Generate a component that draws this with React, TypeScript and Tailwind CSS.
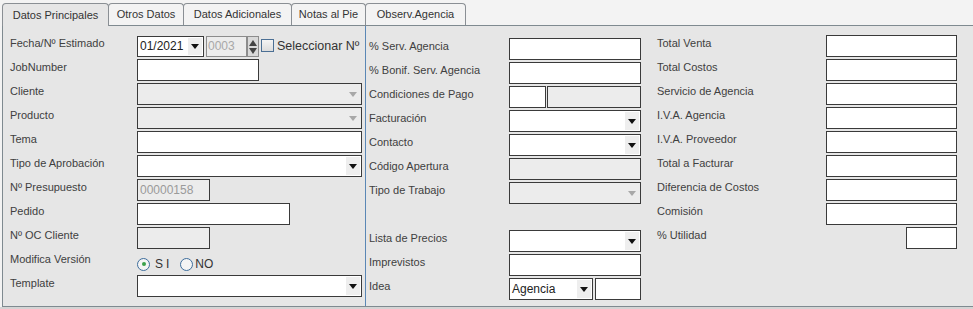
import React from "react";

const font = { fontFamily: '"Liberation Sans", Arial, sans-serif' };

function Arrow({ disabled }: { disabled?: boolean }) {
  return (
    <div
      className={`absolute right-[1px] top-[1px] bottom-[1px] w-[14px] flex items-center justify-center ${
        disabled ? "" : "bg-[#eeeeee]"
      }`}
    >
      <svg width="8" height="5" viewBox="0 0 8 5">
        <path d="M0 0 L8 0 L4 5 Z" fill={disabled ? "#a8a8a8" : "#111"} />
      </svg>
    </div>
  );
}

function Select({ w, disabled, value }: { w: string; disabled?: boolean; value?: string }) {
  return (
    <div
      className={`relative h-[22px] border border-[#3a3a3a] ${w} ${
        disabled ? "bg-[#ececec]" : "bg-white"
      } text-[12px] text-[#222] leading-[20px] pl-[2px]`}
    >
      {value}
      <Arrow disabled={disabled} />
    </div>
  );
}

function Input({ w, disabled, value }: { w: string; disabled?: boolean; value?: string }) {
  return (
    <div
      className={`h-[22px] border border-[#3a3a3a] ${w} ${
        disabled ? "bg-[#ececec] text-[#9a9a9a]" : "bg-white text-[#222]"
      } text-[12px] leading-[20px] pl-[2px]`}
    >
      {value}
    </div>
  );
}

function Row({ label, lw, children }: { label: string; lw: string; children?: React.ReactNode }) {
  return (
    <div className="flex items-start h-[24px]">
      <div className={`${lw} shrink-0 leading-4 text-[11px] text-[#404040]`}>{label}</div>
      <div className="flex items-start gap-[2px]">{children}</div>
    </div>
  );
}

const tabs = ["Datos Principales", "Otros Datos", "Datos Adicionales", "Notas al Pie", "Observ.Agencia"];
const tabW = ["w-[107px]", "w-[76px]", "w-[109px]", "w-[75px]", "w-[101px]"];

export default function App() {
  return (
    <div className="w-[973px] h-[309px] bg-[#f3f3f3] overflow-hidden flex flex-col" style={font}>
      {/* tabs */}
      <div className="flex items-end h-[25px] pl-[2px] shrink-0">
        {tabs.map((t, i) => (
          <div
            key={t}
            className={`${tabW[i]} ${i > 0 ? "-ml-[1px]" : ""} h-[22px] border border-b-0 border-[#8a8f94] rounded-t-[4px] flex items-center justify-center text-[11px] text-[#333] relative ${
              i === 0 ? "bg-[#e6e6e6] z-10 -mb-[1px] h-[23px]" : "bg-[#f3f3f3]"
            }`}
          >
            {t}
          </div>
        ))}
      </div>

      {/* panel */}
      <div className="ml-[2px] h-[282px] shrink-0 bg-[#e6e6e6] border-t border-b border-l border-[#7f8a90] flex">
        {/* left */}
        <div className="w-[362px] pl-[7px] pt-[9px] shrink-0">
          <div className="flex items-start h-[24px]">
            <div className="w-[127px] shrink-0 leading-4 text-[11px] text-[#404040]">Fecha/Nº Estimado</div>
            <div className="flex items-start mt-[1px]">
              <div className="relative h-[21px] w-[67px] border border-[#3a3a3a] bg-white text-[12px] text-[#222] leading-[19px] pl-[2px]">
                01/2021
                <Arrow />
              </div>
              <div className="ml-[2px] h-[21px] w-[41px] border border-[#8c8c8c] bg-[#ececec] text-[12px] text-[#a8a8a8] leading-[19px] pl-[1px]">
                0003
              </div>
              <div className="h-[21px] w-[12px] border border-[#8c8c8c] bg-[#d9d9d9] flex flex-col items-center justify-center gap-[2px]">
                <svg width="8" height="6" viewBox="0 0 8 6">
                  <path d="M4 0 L8 6 L0 6 Z" fill="#444" />
                </svg>
                <svg width="8" height="6" viewBox="0 0 8 6">
                  <path d="M0 0 L8 0 L4 6 Z" fill="#444" />
                </svg>
              </div>
              <div className="ml-[2px] mt-[3px] w-[13px] h-[13px] border border-[#4b6f94] bg-gradient-to-b from-[#f4f4f4] to-[#dcdcdc]" />
              <div className="ml-[3px] mt-[1px] text-[12.5px] leading-[18px] text-[#333]">Seleccionar Nº</div>
            </div>
          </div>
          <Row label="JobNumber" lw="w-[127px]">
            <Input w="w-[122px]" />
          </Row>
          <Row label="Cliente" lw="w-[127px]">
            <Select w="w-[225px]" disabled />
          </Row>
          <Row label="Producto" lw="w-[127px]">
            <Select w="w-[225px]" disabled />
          </Row>
          <Row label="Tema" lw="w-[127px]">
            <Input w="w-[225px]" />
          </Row>
          <Row label="Tipo de Aprobación" lw="w-[127px]">
            <Select w="w-[225px]" />
          </Row>
          <Row label="Nº Presupuesto" lw="w-[127px]">
            <Input w="w-[73px]" disabled value="00000158" />
          </Row>
          <Row label="Pedido" lw="w-[127px]">
            <Input w="w-[153px]" />
          </Row>
          <Row label="Nº OC Cliente" lw="w-[127px]">
            <Input w="w-[73px]" disabled />
          </Row>
          <div className="flex items-start h-[24px]">
            <div className="w-[127px] shrink-0 leading-4 text-[11px] text-[#404040]">Modifica Versión</div>
            <div className="flex items-center mt-[6px] text-[12px] text-[#333] leading-[14px]">
              <div className="w-[13px] h-[13px] rounded-full border border-[#3d6d9c] bg-[#f4f4f4] flex items-center justify-center">
                <div className="w-[4px] h-[4px] rounded-full bg-[#3aa04a]" />
              </div>
              <span className="ml-[5px] tracking-[3px]">SI</span>
              <div className="ml-[8px] w-[13px] h-[13px] rounded-full border border-[#3d6d9c] bg-[#f4f4f4]" />
              <span className="ml-[2px]">NO</span>
            </div>
          </div>
          <Row label="Template" lw="w-[127px]">
            <Select w="w-[225px]" />
          </Row>
        </div>

        <div className="w-[1px] bg-[#5a87b5] shrink-0" />

        {/* middle */}
        <div className="w-[280px] pl-[3px] pt-[12px] shrink-0">
          <Row label="% Serv. Agencia" lw="w-[140px]">
            <Input w="w-[132px]" />
          </Row>
          <Row label="% Bonif. Serv. Agencia" lw="w-[140px]">
            <Input w="w-[132px]" />
          </Row>
          <div className="flex items-start h-[24px]">
            <div className="w-[140px] shrink-0 leading-4 text-[11px] text-[#404040]">Condiciones de Pago</div>
            <div className="flex items-start gap-[1px]">
              <Input w="w-[37px]" />
              <Input w="w-[94px]" disabled />
            </div>
          </div>
          <Row label="Facturación" lw="w-[140px]">
            <Select w="w-[132px]" />
          </Row>
          <Row label="Contacto" lw="w-[140px]">
            <Select w="w-[132px]" />
          </Row>
          <Row label="Código Apertura" lw="w-[140px]">
            <Input w="w-[132px]" disabled />
          </Row>
          <Row label="Tipo de Trabajo" lw="w-[140px]">
            <Select w="w-[132px]" disabled />
          </Row>
          <div className="h-[24px]" />
          <Row label="Lista de Precios" lw="w-[140px]">
            <Select w="w-[132px]" />
          </Row>
          <Row label="Imprevistos" lw="w-[140px]">
            <Input w="w-[132px]" />
          </Row>
          <div className="flex items-start h-[24px]">
            <div className="w-[140px] shrink-0 leading-4 text-[11px] text-[#404040]">Idea</div>
            <div className="flex items-start gap-[2px]">
              <Select w="w-[84px]" value="Agencia" />
              <Input w="w-[46px]" />
            </div>
          </div>
        </div>

        {/* right */}
        <div className="flex-1 pl-[11px] pt-[9px]">
          {[
            "Total Venta",
            "Total Costos",
            "Servicio de Agencia",
            "I.V.A. Agencia",
            "I.V.A. Proveedor",
            "Total a Facturar",
            "Diferencia de Costos",
            "Comisión",
          ].map((l) => (
            <Row key={l} label={l} lw="w-[169px]">
              <Input w="w-[131px]" />
            </Row>
          ))}
          <div className="flex items-start h-[24px]">
            <div className="w-[249px] shrink-0 leading-4 text-[11px] text-[#404040]">% Utilidad</div>
            <Input w="w-[51px]" />
          </div>
        </div>
      </div>
      <div className="flex-1 bg-[#d4d4d4]" />
    </div>
  );
}
